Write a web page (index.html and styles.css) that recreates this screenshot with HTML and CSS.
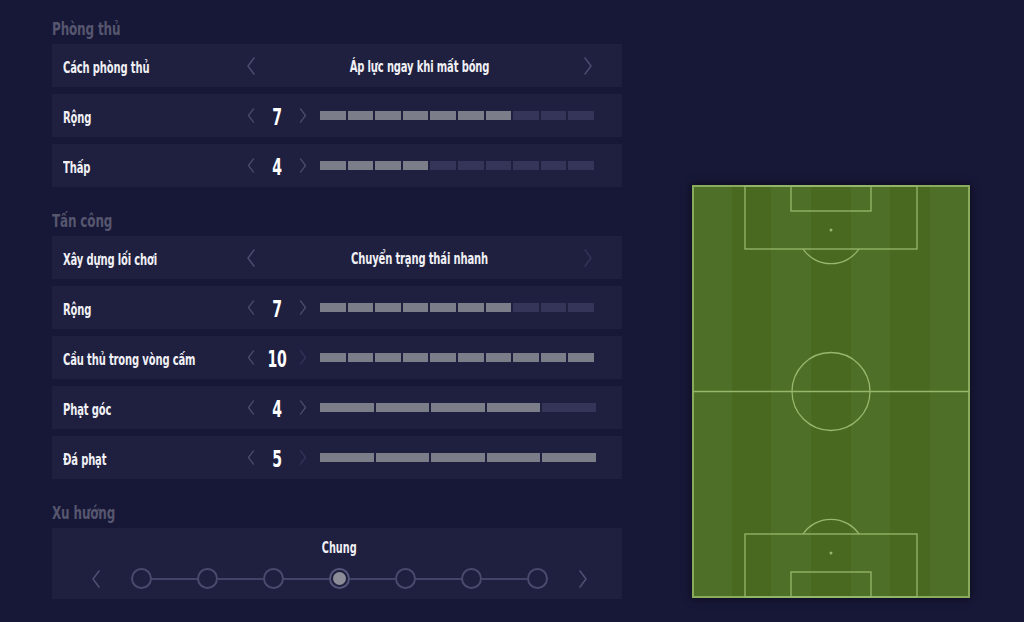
FILE: index.html
```html
<!DOCTYPE html>
<html lang="vi">
<head>
<meta charset="utf-8">
<title>Chiến thuật</title>
<link rel="stylesheet" href="styles.css">
</head>
<body>
<div class="page">
  <div class="left">
    <section class="section first">
      <h2 class="title">Phòng thủ</h2>
      <div class="rows">
        <div class="row">
          <span class="label">Cách phòng thủ</span>
          <div class="select">
            <svg class="chev" viewBox="0 0 10 18"><polyline points="8,1 2,9 8,17"/></svg>
            <span class="value">Áp lực ngay khi mất bóng</span>
            <svg class="chev" viewBox="0 0 10 18"><polyline points="2,1 8,9 2,17"/></svg>
          </div>
        </div>
        <div class="row">
          <span class="label">Rộng</span>
          <div class="stepper">
            <svg class="chev small" viewBox="0 0 10 18"><polyline points="8,1 2,9 8,17"/></svg>
            <span class="num">7</span>
            <svg class="chev small" viewBox="0 0 10 18"><polyline points="2,1 8,9 2,17"/></svg>
          </div>
          <div class="bar">
            <span class="seg on"></span><span class="seg on"></span><span class="seg on"></span><span class="seg on"></span><span class="seg on"></span><span class="seg on"></span><span class="seg on"></span><span class="seg"></span><span class="seg"></span><span class="seg"></span>
          </div>
        </div>
        <div class="row">
          <span class="label">Thấp</span>
          <div class="stepper">
            <svg class="chev small" viewBox="0 0 10 18"><polyline points="8,1 2,9 8,17"/></svg>
            <span class="num">4</span>
            <svg class="chev small" viewBox="0 0 10 18"><polyline points="2,1 8,9 2,17"/></svg>
          </div>
          <div class="bar">
            <span class="seg on"></span><span class="seg on"></span><span class="seg on"></span><span class="seg on"></span><span class="seg"></span><span class="seg"></span><span class="seg"></span><span class="seg"></span><span class="seg"></span><span class="seg"></span>
          </div>
        </div>
      </div>
    </section>

    <section class="section">
      <h2 class="title">Tấn công</h2>
      <div class="rows">
        <div class="row">
          <span class="label">Xây dựng lối chơi</span>
          <div class="select">
            <svg class="chev" viewBox="0 0 10 18"><polyline points="8,1 2,9 8,17"/></svg>
            <span class="value">Chuyển trạng thái nhanh</span>
            <svg class="chev dim" viewBox="0 0 10 18"><polyline points="2,1 8,9 2,17"/></svg>
          </div>
        </div>
        <div class="row">
          <span class="label">Rộng</span>
          <div class="stepper">
            <svg class="chev small" viewBox="0 0 10 18"><polyline points="8,1 2,9 8,17"/></svg>
            <span class="num">7</span>
            <svg class="chev small" viewBox="0 0 10 18"><polyline points="2,1 8,9 2,17"/></svg>
          </div>
          <div class="bar">
            <span class="seg on"></span><span class="seg on"></span><span class="seg on"></span><span class="seg on"></span><span class="seg on"></span><span class="seg on"></span><span class="seg on"></span><span class="seg"></span><span class="seg"></span><span class="seg"></span>
          </div>
        </div>
        <div class="row">
          <span class="label">Cầu thủ trong vòng cấm</span>
          <div class="stepper">
            <svg class="chev small" viewBox="0 0 10 18"><polyline points="8,1 2,9 8,17"/></svg>
            <span class="num">10</span>
            <svg class="chev small dim" viewBox="0 0 10 18"><polyline points="2,1 8,9 2,17"/></svg>
          </div>
          <div class="bar">
            <span class="seg on"></span><span class="seg on"></span><span class="seg on"></span><span class="seg on"></span><span class="seg on"></span><span class="seg on"></span><span class="seg on"></span><span class="seg on"></span><span class="seg on"></span><span class="seg on"></span>
          </div>
        </div>
        <div class="row">
          <span class="label">Phạt góc</span>
          <div class="stepper">
            <svg class="chev small" viewBox="0 0 10 18"><polyline points="8,1 2,9 8,17"/></svg>
            <span class="num">4</span>
            <svg class="chev small" viewBox="0 0 10 18"><polyline points="2,1 8,9 2,17"/></svg>
          </div>
          <div class="bar five">
            <span class="seg on"></span><span class="seg on"></span><span class="seg on"></span><span class="seg on"></span><span class="seg"></span>
          </div>
        </div>
        <div class="row">
          <span class="label">Đá phạt</span>
          <div class="stepper">
            <svg class="chev small" viewBox="0 0 10 18"><polyline points="8,1 2,9 8,17"/></svg>
            <span class="num">5</span>
            <svg class="chev small dim" viewBox="0 0 10 18"><polyline points="2,1 8,9 2,17"/></svg>
          </div>
          <div class="bar five">
            <span class="seg on"></span><span class="seg on"></span><span class="seg on"></span><span class="seg on"></span><span class="seg on"></span>
          </div>
        </div>
      </div>
    </section>

    <section class="section">
      <h2 class="title">Xu hướng</h2>
      <div class="trend">
        <div class="trend-name">Chung</div>
        <div class="track">
          <svg class="chev" viewBox="0 0 10 18"><polyline points="8,1 2,9 8,17"/></svg>
          <div class="dots">
            <span class="dot"></span><span class="line"></span>
            <span class="dot"></span><span class="line"></span>
            <span class="dot"></span><span class="line"></span>
            <span class="dot active"></span><span class="line"></span>
            <span class="dot"></span><span class="line"></span>
            <span class="dot"></span><span class="line"></span>
            <span class="dot"></span>
          </div>
          <svg class="chev" viewBox="0 0 10 18"><polyline points="2,1 8,9 2,17"/></svg>
        </div>
      </div>
    </section>
  </div>

  <div class="pitch-col">
    <div class="pitch">
      <svg class="pitch-lines" viewBox="0 0 278 413" width="278" height="413">
        <rect x="1" y="1" width="276" height="411" class="outer"/>
        <line x1="1" y1="206.5" x2="277" y2="206.5"/>
        <circle cx="139" cy="206.5" r="39"/>
        <rect x="53" y="1" width="172" height="63"/>
        <rect x="99" y="1" width="80" height="25"/>
        <circle cx="139" cy="45" r="1.5" class="spot"/>
        <path d="M111 64 A34 34 0 0 0 167 64"/>
        <rect x="53" y="349" width="172" height="63"/>
        <rect x="99" y="387" width="80" height="25"/>
        <circle cx="139" cy="368" r="1.5" class="spot"/>
        <path d="M111 349 A34 34 0 0 1 167 349"/>
      </svg>
    </div>
  </div>
</div>
</body>
</html>
```

FILE: styles.css
```css
html, body {
  margin: 0;
  padding: 0;
}

body {
  background: #171737;
  font-family: "DejaVu Sans Condensed", "DejaVu Sans", sans-serif;
  font-stretch: condensed;
  font-weight: bold;
  color: #ececf2;
  width: 1024px;
  height: 622px;
  overflow: hidden;
}

.page {
  display: flex;
  padding-left: 52px;
}

.left {
  width: 570px;
  display: flex;
  flex-direction: column;
}

.section.first {
  padding-top: 15px;
}

.section + .section {
  margin-top: 20px;
}

.title {
  margin: 0 0 5px;
  box-sizing: border-box;
  height: 24px;
  padding-top: 2px;
  line-height: 24px;
  font-size: 18px;
  font-weight: bold;
  color: #56566e;
  letter-spacing: -0.2px;
  transform: scaleX(0.74);
  transform-origin: left center;
}

.rows {
  display: flex;
  flex-direction: column;
  gap: 7px;
}

.row {
  height: 43px;
  background: #1f1f3f;
  display: flex;
  align-items: center;
  padding-left: 11px;
}

.label {
  width: 183px;
  padding-top: 4px;
  font-size: 15px;
  letter-spacing: -0.2px;
  color: #f0f0f5;
  white-space: nowrap;
  transform: scaleX(0.74);
  transform-origin: left center;
}

.chev {
  width: 10px;
  height: 18px;
  flex: none;
  fill: none;
  stroke: #4a4a6c;
  stroke-width: 1.6;
  stroke-linecap: round;
  stroke-linejoin: round;
}

.chev.small {
  height: 15px;
}

.chev.dim {
  stroke: #33335a;
}

.select {
  width: 347px;
  display: flex;
  align-items: center;
}

.value {
  flex: 1;
  padding-top: 3px;
  text-align: center;
  font-size: 15px;
  letter-spacing: -0.2px;
  color: #f0f0f5;
  white-space: nowrap;
  transform: scaleX(0.74);
}

.stepper {
  display: flex;
  align-items: center;
}

.num {
  width: 42px;
  padding-top: 2px;
  text-align: center;
  font-size: 23px;
  line-height: 26px;
  color: #ffffff;
  letter-spacing: -0.5px;
  transform: scaleX(0.68);
}

.bar {
  margin-left: 12px;
  width: 274px;
  height: 9px;
  display: flex;
  gap: 2px;
}

.bar.five {
  width: 276px;
}

.seg {
  flex: 1;
  background: #35355a;
}

.seg.on {
  background: #7b7d89;
}

.trend {
  height: 71px;
  background: #1f1f3f;
  box-sizing: border-box;
  padding: 10px 0 0 4px;
  display: flex;
  flex-direction: column;
  align-items: center;
}

.trend-name {
  height: 20px;
  line-height: 20px;
  font-size: 15px;
  color: #f0f0f5;
  transform: scaleX(0.72);
}

.track {
  margin-top: 10px;
  display: flex;
  align-items: center;
  gap: 30px;
}

.track .chev {
  stroke: #4e4e70;
}

.dots {
  display: flex;
  align-items: center;
}

.dot {
  width: 21px;
  height: 21px;
  box-sizing: border-box;
  border: 2px solid #4a4a6c;
  border-radius: 50%;
  display: flex;
  align-items: center;
  justify-content: center;
}

.dot.active {
  border-color: #55557a;
}

.dot.active::after {
  content: "";
  width: 13px;
  height: 13px;
  border-radius: 50%;
  background: #8c8c98;
}

.line {
  width: 45px;
  height: 2px;
  background: #44446a;
}

.pitch-col {
  margin-left: 70px;
  padding-top: 185px;
}

.pitch {
  width: 278px;
  height: 413px;
  background: repeating-linear-gradient(90deg, #4e6f27 0, #4e6f27 39.7px, #48691f 39.7px, #48691f 79.4px);
  box-shadow: 0 0 8px rgba(0, 0, 0, 0.55);
}

.pitch-lines {
  display: block;
}

.pitch-lines rect,
.pitch-lines line,
.pitch-lines circle,
.pitch-lines path {
  fill: none;
  stroke: #97b86c;
  stroke-width: 1.3;
}

.pitch-lines .outer {
  stroke-width: 2;
  stroke: #8aab5c;
}

.pitch-lines .spot {
  fill: #97b86c;
  stroke: none;
}
```
